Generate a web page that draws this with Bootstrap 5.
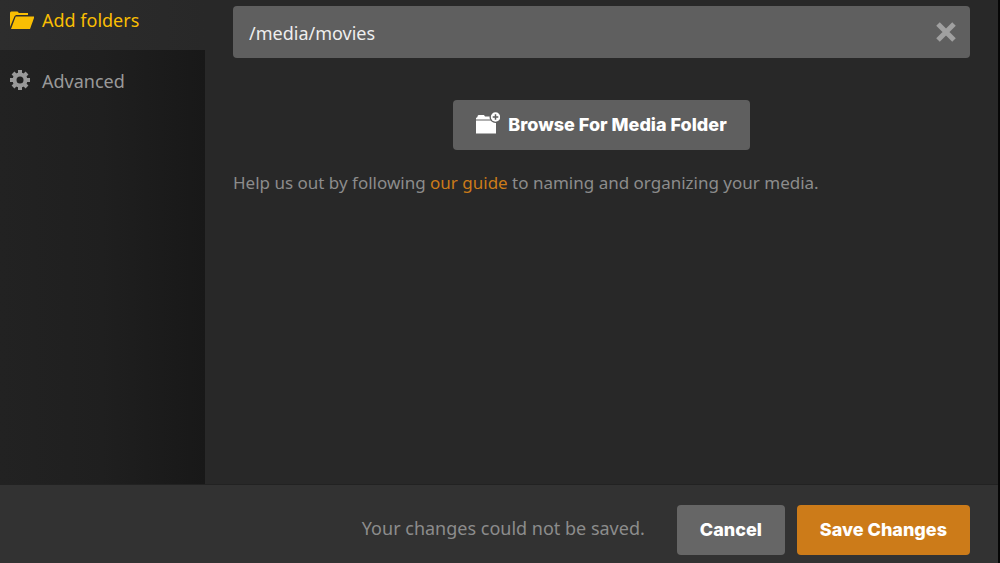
<!DOCTYPE html>
<html lang="en">
<head>
<meta charset="utf-8">
<meta name="viewport" content="width=device-width, initial-scale=1">
<title>Add folders</title>
<link href="https://cdn.jsdelivr.net/npm/bootstrap@5.3.0/dist/css/bootstrap.min.css" rel="stylesheet">
<style>
body { background: #282828; color: #8c8c8c; font-family: "Noto Sans", "Open Sans", sans-serif; font-size: 18px; line-height: 26px; }
.dialog-shell { border-right: 2px solid #060606; }
.side-menu { width: 205px; background: linear-gradient(90deg, #222 0%, #1f1f1f 50%, #181818 100%); }
.side-menu .nav-link { display: flex; align-items: center; gap: 8px; padding: 18px 10px; color: #999; }
.side-menu .nav-link svg { width: 24px; height: 24px; flex: none; }
.side-menu .nav-link.active { color: #f9be03; background: linear-gradient(90deg, #2d2d2d, #282828); padding-top: 7px; padding-bottom: 17px; }
.content-pane { padding: 6px 28px 24px; }
.path-box { background: #5f5f5f; border-radius: 4px; }
.path-box .form-control, .path-box .form-control:focus { background: transparent; border: 0; box-shadow: none; color: #eee; font-size: 18px; line-height: 26px; padding: 14px 16px 12px; }
.path-box .btn { line-height: 0; color: #a0a0a0; padding: 0 14px; border: 0; }
.action { font-family: Inter, sans-serif; font-weight: 800; font-size: 18px; line-height: 26px; color: #fff; padding: 12px 23px; border: 0; border-radius: 4px; }
.action:hover { color: #fff; }
.action-browse { background: #5f5f5f; margin: 42px 0 20px; }
.action-cancel { background: #666; }
.action-save { background: #cc7b19; }
.help-note { font-size: 17px; }
.guide-link { color: #cc7b19; text-decoration: none; }
.footer-bar { background: #323232; border-top: 1px solid #222; padding: 20px 28px 8px; }
.save-status { padding: 0 32px 4px 0; }
</style>
</head>
<body>
<div class="dialog-shell d-flex flex-column min-vh-100">
  <div class="d-flex flex-grow-1">
    <nav class="side-menu nav flex-column flex-nowrap flex-shrink-0" aria-label="Library settings">
      <a class="nav-link active" href="#folders" aria-current="page">
        <svg viewBox="0 0 24 24" fill="currentColor" aria-hidden="true"><path d="M0 19V5Q0 3.500 1.300 3.500H7.500L9 5H18V7H6L4.500 8.200 0 19Z"/><path d="M1 21 5.700 8.500H24.500L20 21Z"/></svg>
        Add folders
      </a>
      <a class="nav-link" href="#advanced">
        <svg viewBox="0 0 24 24" aria-hidden="true"><g fill="none" stroke="currentColor"><circle cx="10" cy="11" r="5.500" stroke-width="4"/><path stroke-width="4" d="M10 1V5M10 17V21M0 11H4M16 11H20M3 4 6 7M14 15 17 18M3 18 6 15M14 7 17 4"/></g></svg>
        Advanced
      </a>
    </nav>
    <main class="content-pane flex-grow-1">
      <div class="path-box d-flex align-items-center">
        <input class="form-control" type="text" value="/media/movies" aria-label="Folder path">
        <button class="btn" type="button" aria-label="Remove folder">
          <svg width="20" height="20" viewBox="0 0 20 20" fill="none" stroke="currentColor" stroke-width="5" aria-hidden="true"><path d="M2 2 18 18M18 2 2 18"/></svg>
        </button>
      </div>
      <div class="text-center">
        <button class="btn action action-browse" type="button">
          <span class="d-flex align-items-center gap-2">
            <svg width="24" height="26" viewBox="0 0 24 26" aria-hidden="true"><path fill="#fff" d="M0 7.500V6L1.500 5V4L2.500 3H8L9 4.500H15V7.500ZM0 8.500H20V21.500H0Z"/><circle cx="19.500" cy="5" r="6" fill="#5f5f5f"/><circle cx="19.500" cy="5" r="4.700" fill="#fff"/><path d="M16.700 5H22.300M19.500 2.200V7.800" stroke="#5f5f5f" stroke-width="1.500"/></svg>
            Browse For Media Folder
          </span>
        </button>
      </div>
      <p class="help-note mb-0">Help us out by following <a class="guide-link" href="#guide">our guide</a> to naming and organizing your media.</p>
    </main>
  </div>
  <footer class="footer-bar d-flex align-items-center justify-content-end">
    <span class="save-status" role="status">Your changes could not be saved.</span>
    <button class="btn action action-cancel me-2" type="button">Cancel</button>
    <button class="btn action action-save ms-1" type="button">Save Changes</button>
  </footer>
</div>
<script src="https://cdn.jsdelivr.net/npm/bootstrap@5.3.0/dist/js/bootstrap.bundle.min.js"></script>
</body>
</html>
